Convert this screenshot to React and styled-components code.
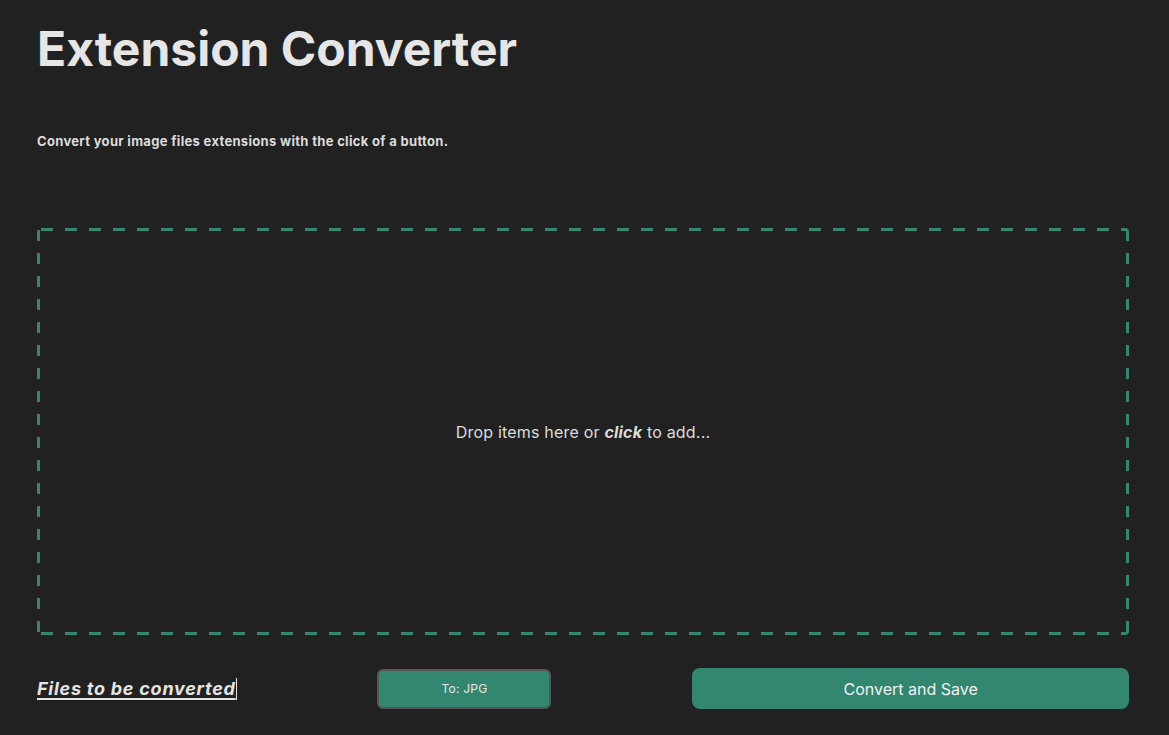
import React from 'react';
import styled, { createGlobalStyle } from 'styled-components';

const GlobalStyle = createGlobalStyle`
  html, body {
    margin: 0;
    background-color: #212121;
    color: #e4e4e4;
    font-family: Inter, "Noto Sans", sans-serif;
  }
`;

const Page = styled.div`
  display: flex;
  flex-direction: column;
  padding: 0 40px 0 37px;
  min-height: 735px;
  box-sizing: border-box;
`;

const Title = styled.h1`
  margin: 20px 0 0;
  font-size: 48px;
  font-weight: 700;
  line-height: 58px;
  color: #e6e6e6;
`;

const Subtitle = styled.p`
  margin: 55px 0 0;
  font-size: 13px;
  font-weight: 700;
  line-height: 16px;
  letter-spacing: 0.32px;
  color: #dcdcdc;
`;

const dash = '#338670';

const DropZone = styled.div`
  margin-top: 79px;
  height: 407px;
  display: flex;
  align-items: center;
  justify-content: center;
  box-sizing: border-box;
  font-size: 16px;
  letter-spacing: 0.2px;
  color: #dcdcdc;
  cursor: pointer;
  border-radius: 4px;
  background:
    linear-gradient(90deg, ${dash} 50%, transparent 50%) 4px top / 24px 3px repeat-x,
    linear-gradient(90deg, ${dash} 50%, transparent 50%) 4px bottom / 24px 3px repeat-x,
    linear-gradient(180deg, ${dash} 50%, transparent 50%) left 2px / 3px 23px repeat-y,
    linear-gradient(180deg, ${dash} 50%, transparent 50%) right 2px / 3px 23px repeat-y;

  em {
    font-weight: 700;
  }
`;

const Footer = styled.div`
  margin-top: 33px;
  display: flex;
  align-items: center;
  justify-content: space-between;
`;

const FilesLabel = styled.span`
  font-size: 18px;
  font-weight: 700;
  font-style: italic;
  letter-spacing: 0.75px;
  text-decoration: underline;
  text-underline-offset: 3px;
  text-decoration-thickness: 2px;
  color: #e4e4e4;
  border-right: 1px solid #e4e4e4;
  line-height: 22px;
  white-space: nowrap;
`;

const FormatButton = styled.button`
  width: 174px;
  height: 40px;
  background-color: #338670;
  border: 2px solid #555555;
  border-radius: 6px;
  color: #e8e8e8;
  font-family: Inter, "Noto Sans", sans-serif;
  font-size: 12px;
  letter-spacing: 0.2px;
  cursor: pointer;
`;

const SaveButton = styled.button`
  width: 40%;
  height: 41px;
  background-color: #338670;
  border: none;
  border-radius: 8px;
  color: #f2f2f2;
  font-family: Inter, "Noto Sans", sans-serif;
  font-size: 16px;
  cursor: pointer;
`;

function App() {
  return (
    <Page>
      <GlobalStyle />
      <Title>Extension Converter</Title>
      <Subtitle>Convert your image files extensions with the click of a button.</Subtitle>
      <DropZone>
        <span>
          Drop items here or <em>click</em> to add...
        </span>
      </DropZone>
      <Footer>
        <FilesLabel>Files to be converted</FilesLabel>
        <FormatButton>To: JPG</FormatButton>
        <SaveButton>Convert and Save</SaveButton>
      </Footer>
    </Page>
  );
}

export default App;
